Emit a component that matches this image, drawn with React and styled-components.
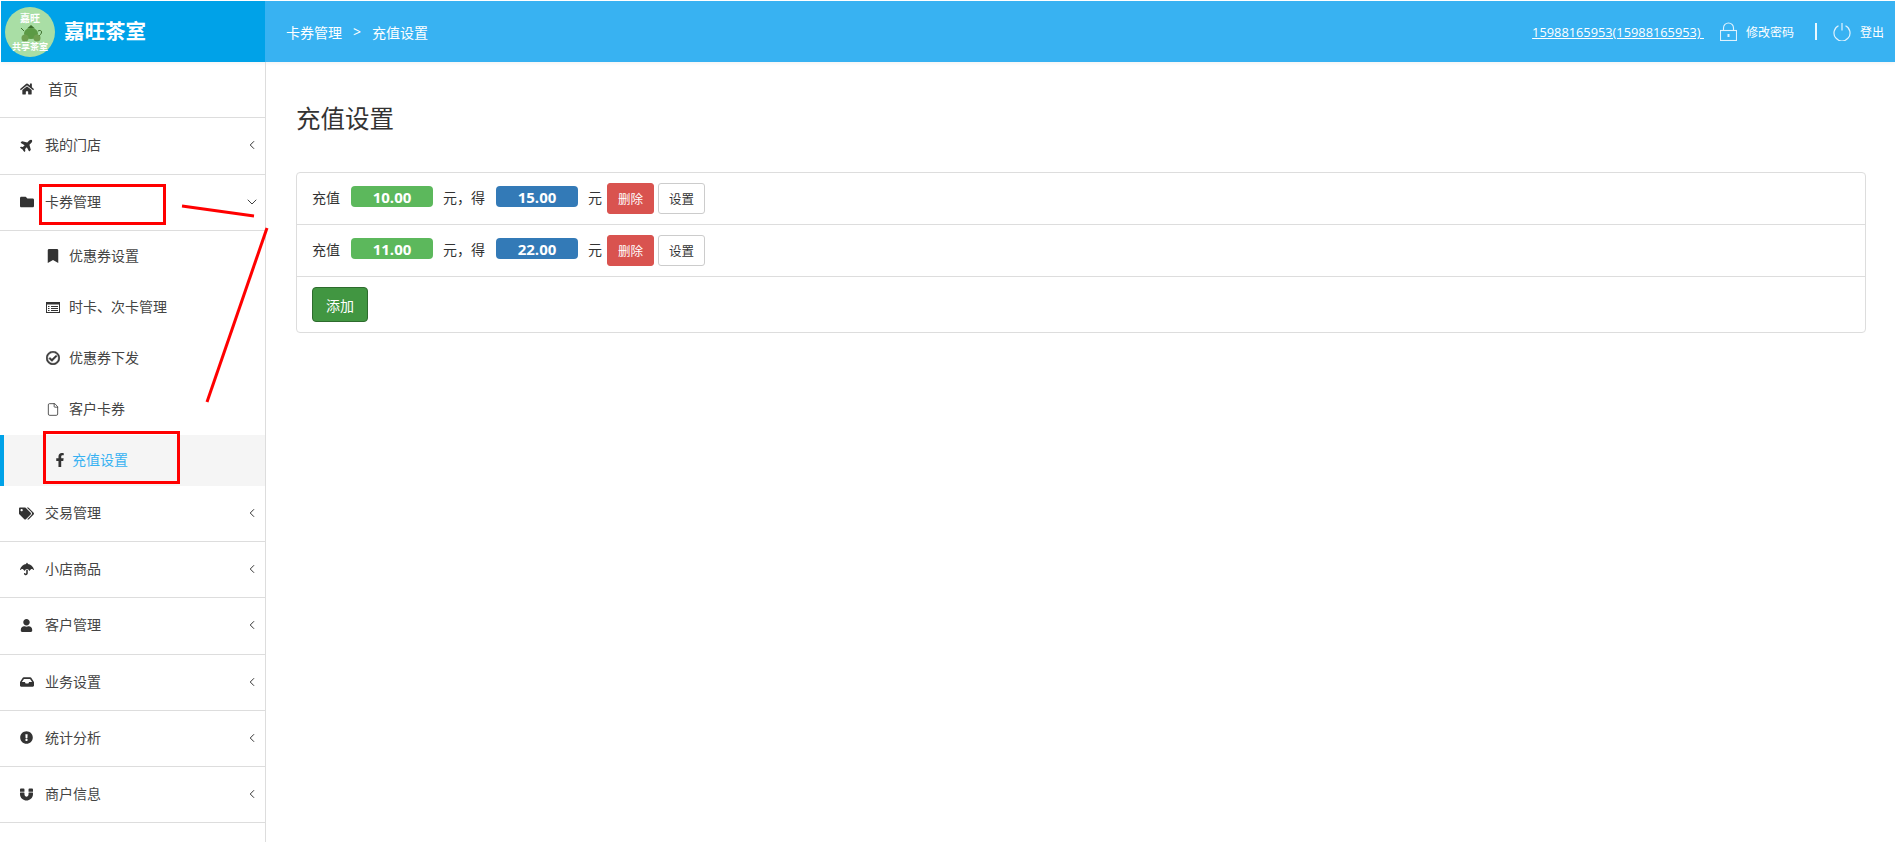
import React from "react";
import styled, { createGlobalStyle } from "styled-components";
import {
  FaHome, FaPlane, FaFolder, FaBookmark, FaRegCheckCircle,
  FaFacebookF, FaTags, FaUmbrella, FaUser, FaInbox, FaExclamationCircle, FaMagnet,
} from "react-icons/fa";
import { ChevronLeft, ChevronDown, File as FileIcon } from "lucide-react";

const Global = createGlobalStyle`
  html, body { margin: 0; padding: 0; background: #fff; }
  body { font-family: "Open Sans", "Noto Sans CJK SC", sans-serif; font-size: 14px; color: #333; }
  * { box-sizing: border-box; }
`;

const Page = styled.div`
  position: relative;
  width: 1895px;
  height: 842px;
  overflow: hidden;
  display: flex;
  flex-direction: column;
`;

const Header = styled.header`
  display: flex;
  height: 62px;
  flex: none;
  padding: 1px 0 0 1px;
  box-shadow: 0 1px 4px rgba(0, 0, 0, 0.06);
`;

const Brand = styled.div`
  width: 264px;
  flex: none;
  background: #00a2e8;
  display: flex;
  align-items: center;
  padding-left: 4px;
  gap: 9px;
`;

const BrandName = styled.span`
  color: #fff;
  font-size: 20.5px;
  font-weight: 700;
  line-height: 1;
`;

const TopBar = styled.div`
  flex: 1;
  background: #38b2f2;
  color: #fff;
  display: flex;
  align-items: center;
  justify-content: space-between;
  padding: 0 11px 0 21px;
`;

const Crumbs = styled.div`
  display: flex;
  gap: 11px;
  font-size: 14px;
`;

const TopRight = styled.div`
  display: flex;
  align-items: center;
`;

const Account = styled.a`
  font-size: 12.8px;
  color: #fff;
  text-decoration: underline;
  margin-right: 16px;
`;

const TopAction = styled.span`
  display: flex;
  align-items: center;
  gap: 9px;
  font-size: 12px;
  color: #fff;
`;

const Divider = styled.span`
  width: 2px;
  height: 17px;
  background: #fff;
  opacity: 0.9;
  margin: 0 16px 0 21px;
`;

const Body = styled.div`
  flex: 1;
  display: flex;
  min-height: 0;
`;

const Sidebar = styled.nav`
  width: 266px;
  flex: none;
  border-right: 1px solid #ddd;
  color: #444;
`;

const MenuRow = styled.div`
  height: ${(p) => (p.$h ? p.$h : 56.2)}px;
  border-bottom: 1px solid #ddd;
  display: flex;
  align-items: center;
  padding: 0 5px 1px 19px;
  font-size: 14px;
  line-height: 1;
`;

const MenuIcon = styled.span`
  width: 15px;
  margin-right: 11px;
  flex: none;
  display: flex;
  align-items: center;
  justify-content: center;
  font-size: ${(p) => p.$size || 13}px;
  color: #333;
`;

const PlaneTilt = styled(FaPlane)`
  transform: rotate(-45deg);
`;

const MenuLabel = styled.span`
  flex: 1;
  font-size: ${(p) => (p.$large ? "15px" : "14px")};
  margin-left: ${(p) => (p.$large ? "3px" : "0")};
`;

const Chevron = styled.span`
  display: flex;
  width: 16px;
  justify-content: center;
  color: #333;
`;

const SubRow = styled.div`
  position: relative;
  height: 51px;
  display: flex;
  align-items: center;
  padding-bottom: 1px;
  padding-left: ${(p) => (p.$active ? "49px" : "46px")};
  background: ${(p) => (p.$active ? "#f5f5f5" : "transparent")};
  color: ${(p) => (p.$active ? "#38b2f2" : "#444")};
  border-left: ${(p) => (p.$active ? "4px solid #00a2e8" : "0")};
  font-size: 14px;
  line-height: 1;
`;

const SubIcon = styled.span`
  width: ${(p) => (p.$active ? "19px" : "14px")};
  margin-right: ${(p) => (p.$active ? "0" : "9px")};
  flex: none;
  display: flex;
  justify-content: ${(p) => (p.$active ? "flex-start" : "center")};
  font-size: 14px;
  color: #333;
`;

const BoldCheck = styled(FaRegCheckCircle)`
  stroke: currentColor;
  stroke-width: 22px;
`;

const Main = styled.main`
  flex: 1;
  padding: 41px 29px 0 30px;
`;

const Title = styled.h1`
  margin: 0 0 37px;
  font-size: 24.5px;
  font-weight: 400;
  line-height: 32px;
  color: #333;
`;

const Panel = styled.section`
  border: 1px solid #ddd;
  border-radius: 4px;
`;

const Row = styled.div`
  display: flex;
  align-items: center;
  height: 52px;
  padding: 0 15px;
  border-bottom: 1px solid #ddd;
  font-size: 14px;
  color: #333;
`;

const Plain = styled.span`
  margin: 0 ${(p) => p.$right}px 0 ${(p) => p.$left}px;
  position: relative;
  top: -2px;
`;

const Badge = styled.span`
  width: 82px;
  height: 21px;
  border-radius: 4px;
  background: ${(p) => p.$color};
  color: #fff;
  font-size: 15px;
  font-weight: 700;
  display: flex;
  align-items: center;
  justify-content: center;
  position: relative;
  top: -2px;
`;

const SmallButton = styled.button`
  width: 47px;
  height: 31px;
  margin-right: 4px;
  padding: 0;
  border-radius: 3px;
  border: 1px solid ${(p) => (p.$danger ? "#d9534f" : "#ccc")};
  background: ${(p) => (p.$danger ? "#d9534f" : "#fff")};
  color: ${(p) => (p.$danger ? "#fff" : "#333")};
  font: 12.5px "Open Sans", "Noto Sans CJK SC", sans-serif;
`;

const AddRow = styled.div`
  padding: 10px 15px;
  display: flex;
`;

const AddButton = styled.button`
  width: 56px;
  height: 35px;
  padding: 0;
  border-radius: 4px;
  border: 1px solid #2d6b2d;
  background: #419641;
  color: #fff;
  font: 14px "Open Sans", "Noto Sans CJK SC", sans-serif;
`;

const RedBox = styled.div`
  position: absolute;
  left: ${(p) => p.$x}px;
  top: ${(p) => p.$y}px;
  width: ${(p) => p.$w}px;
  height: ${(p) => p.$h}px;
  border: 3px solid #f00;
`;

const Scribble = styled.svg`
  position: absolute;
  left: 0;
  top: 0;
  pointer-events: none;
`;

const Logo = () => (
  <svg width="50" height="50" viewBox="0 0 50 50">
    <circle cx="25" cy="25" r="25" fill="#a9dea5" />
    <text x="25" y="15" textAnchor="middle" fontSize="10" fontWeight="700" fill="#fff" fontFamily="Noto Sans CJK SC">嘉旺</text>
    <path d="M22 21.5h8l-4-3.5z" fill="#3d6f2c" />
    <path d="M33 24c4-2 5 2 1 5M19 24l-3-3" fill="none" stroke="#3d6f2c" strokeWidth="1" />
    <ellipse cx="26" cy="26.5" rx="7" ry="5.5" fill="#5c9a45" />
    <circle cx="20" cy="31" r="3.5" fill="#6f9f50" />
    <circle cx="32" cy="31" r="3.5" fill="#6f9f50" />
    <text x="25" y="43" textAnchor="middle" fontSize="9" fontWeight="700" fill="#fff" fontFamily="Noto Sans CJK SC">共享茶室</text>
  </svg>
);

const LockIcon = () => (
  <svg width="17" height="19" viewBox="0 0 17 19" fill="none" stroke="#dff2fe" strokeWidth="1.1">
    <rect x="0.5" y="8.5" width="16" height="10" />
    <path d="M3.5 8.5V6a5 5 0 0 1 10 0v2.5" />
    <rect x="7.5" y="12" width="2" height="3" fill="#dff2fe" stroke="none" />
  </svg>
);

const PowerIcon = () => (
  <svg width="18" height="18" viewBox="0 0 18 18" fill="none" stroke="#dff2fe" strokeWidth="1.2">
    <path d="M5.5 2.8a8 8 0 1 0 7 0" />
    <path d="M9 0v7.5" />
  </svg>
);

const ListAltIcon = () => (
  <svg width="14" height="11" viewBox="0 0 14 11">
    <rect x="0.5" y="0.5" width="13" height="10" fill="none" stroke="#333" strokeWidth="1" />
    <rect x="0" y="0" width="14" height="2.5" fill="#333" />
    <path d="M2 4.5h1.5M5 4.5h7M2 6.5h1.5M5 6.5h7M2 8.5h1.5M5 8.5h7" stroke="#333" strokeWidth="1" />
  </svg>
);

const topMenu = [
  { icon: <FaHome />, size: 14, label: "首页", large: true, h: 56 },
  { icon: <PlaneTilt />, size: 14, label: "我的门店", chev: "left", h: 56.5 },
  { icon: <FaFolder />, size: 14, label: "卡券管理", chev: "down", h: 56.5 },
];

const subMenu = [
  { icon: <FaBookmark />, label: "优惠券设置" },
  { icon: <ListAltIcon />, label: "时卡、次卡管理" },
  { icon: <BoldCheck />, label: "优惠券下发" },
  { icon: <FileIcon size={17} strokeWidth={1.4} color="#333" />, label: "客户卡券" },
  { icon: <FaFacebookF />, label: "充值设置", active: true },
];

const bottomMenu = [
  { icon: <FaTags />, size: 15, label: "交易管理" },
  { icon: <FaUmbrella />, size: 14, label: "小店商品" },
  { icon: <FaUser />, label: "客户管理" },
  { icon: <FaInbox />, size: 14, label: "业务设置" },
  { icon: <FaExclamationCircle />, label: "统计分析" },
  { icon: <FaMagnet />, label: "商户信息" },
];

const rules = [
  { pay: "10.00", get: "15.00" },
  { pay: "11.00", get: "22.00" },
];

const MenuItem = ({ item }) => (
  <MenuRow $h={item.h}>
    <MenuIcon $size={item.size}>{item.icon}</MenuIcon>
    <MenuLabel $large={item.large}>{item.label}</MenuLabel>
    {item.chev === "down" ? (
      <Chevron><ChevronDown size={16} strokeWidth={1.4} /></Chevron>
    ) : item.chev === "left" ? (
      <Chevron><ChevronLeft size={14} strokeWidth={1.7} /></Chevron>
    ) : null}
  </MenuRow>
);

export default function App() {
  return (
    <Page>
      <Global />
      <Header>
        <Brand>
          <Logo />
          <BrandName>嘉旺茶室</BrandName>
        </Brand>
        <TopBar>
          <Crumbs>
            <span>卡券管理</span>
            <span>&gt;</span>
            <span>充值设置</span>
          </Crumbs>
          <TopRight>
            <Account>15988165953(15988165953)&nbsp;</Account>
            <TopAction><LockIcon />修改密码</TopAction>
            <Divider />
            <TopAction><PowerIcon />登出</TopAction>
          </TopRight>
        </TopBar>
      </Header>
      <Body>
        <Sidebar>
          {topMenu.map((m) => <MenuItem key={m.label} item={m} />)}
          {subMenu.map((s) => (
            <SubRow key={s.label} $active={s.active}>
              <SubIcon $active={s.active}>{s.icon}</SubIcon>
              {s.label}
            </SubRow>
          ))}
          {bottomMenu.map((m) => <MenuItem key={m.label} item={{ ...m, chev: "left" }} />)}
        </Sidebar>
        <Main>
          <Title>充值设置</Title>
          <Panel>
            {rules.map((r) => (
              <Row key={r.pay}>
                <Plain $left={0} $right={11}>充值</Plain>
                <Badge $color="#5cb85c">{r.pay}</Badge>
                <Plain $left={10} $right={11}>元，得</Plain>
                <Badge $color="#337ab7">{r.get}</Badge>
                <Plain $left={10} $right={5}>元</Plain>
                <SmallButton $danger>删除</SmallButton>
                <SmallButton>设置</SmallButton>
              </Row>
            ))}
            <AddRow>
              <AddButton>添加</AddButton>
            </AddRow>
          </Panel>
        </Main>
      </Body>
      <RedBox $x={39} $y={184} $w={127} $h={41} />
      <RedBox $x={43} $y={431} $w={137} $h={53} />
      <Scribble width="1895" height="842">
        <line x1="182" y1="206" x2="254" y2="216" stroke="#f00" strokeWidth="3" />
        <line x1="267" y1="228" x2="207" y2="402" stroke="#f00" strokeWidth="3" />
      </Scribble>
    </Page>
  );
}
